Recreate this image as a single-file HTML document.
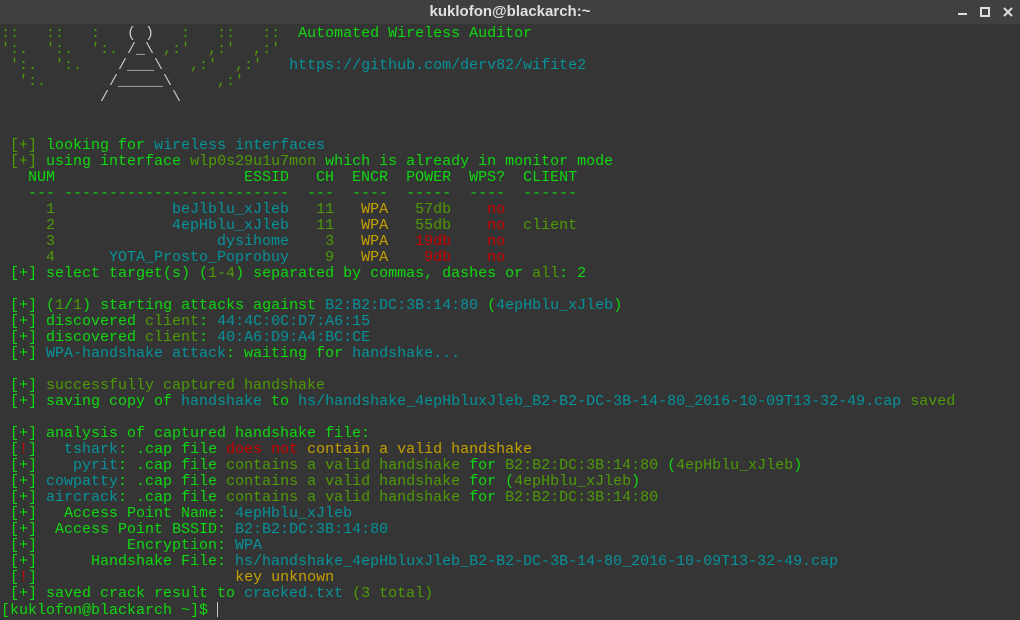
<!DOCTYPE html>
<html><head><meta charset="utf-8">
<style>
html,body{margin:0;padding:0;}
body{width:1020px;height:620px;background:#353535;overflow:hidden;position:relative;}
.title{position:absolute;left:0;top:0;width:1020px;height:24px;background:#404040;color:#e0e0e0;font:bold 15px "Liberation Sans",sans-serif;text-align:center;line-height:24px;}
.ctl{position:absolute;top:0;height:24px;}
.term{position:absolute;left:1px;top:26px;font:15px/16px "Liberation Mono",monospace;color:#10d810;}
.term div{height:16px;white-space:pre;}
.g{color:#10d810}.d{color:#4e9a06}.c{color:#06939a}.y{color:#c4a000}.r{color:#cc0000}.w{color:#c8c8c8}
.cur{display:inline-block;width:1px;height:15px;background:#c8c8c8;vertical-align:-3px;}
</style></head><body>
<div class="title">kuklofon@blackarch:~</div>
<svg class="ctl" style="left:950px" width="70" height="24">
<rect x="8" y="13" width="9" height="2" fill="#ddd"/>
<rect x="31" y="8" width="8" height="8" fill="none" stroke="#ddd" stroke-width="2"/>
<path d="M54 8 L62 16 M62 8 L54 16" stroke="#ddd" stroke-width="2"/>
</svg>
<div class="term"><div><span class="d">::   ::   :   </span><span class="w">( )</span><span class="d">   :   ::   ::</span>  <span class="g">Automated Wireless Auditor</span></div><div><span class="d">':.  ':.  ':. </span><span class="w">/_\</span><span class="d"> ,:'  ,:'  ,:'</span></div><div><span class="d"> ':.  ':.    </span><span class="w">/___\</span><span class="d">   ,:'  ,:'</span>   <span class="c">https://github.com/derv82/wifite2</span></div><div><span class="d">  ':.       </span><span class="w">/_____\</span><span class="d">     ,:'</span></div><div><span class="w">           /       \</span></div><div> </div><div> </div><div> <span class="d">[+]</span> looking for <span class="c">wireless interfaces</span></div><div> <span class="d">[+]</span> using interface <span class="d">wlp0s29u1u7mon</span> which is already in monitor mode</div><div>   NUM                     ESSID   CH  ENCR  POWER  WPS?  CLIENT</div><div>   --- -------------------------  ---  ----  -----  ----  ------</div><div><span class="d">     1</span><span class="c">             beJlblu_xJleb</span><span class="d">   11</span><span class="y">   WPA</span><span class="d">   57db</span><span class="r">    no</span></div><div><span class="d">     2</span><span class="c">             4epHblu_xJleb</span><span class="d">   11</span><span class="y">   WPA</span><span class="d">   55db</span><span class="r">    no</span>  <span class="d">client</span></div><div><span class="d">     3</span><span class="c">                  dysihome</span><span class="d">    3</span><span class="y">   WPA</span><span class="r">   19db</span><span class="r">    no</span></div><div><span class="d">     4</span><span class="c">      YOTA_Prosto_Poprobuy</span><span class="d">    9</span><span class="y">   WPA</span><span class="r">    9db</span><span class="r">    no</span></div><div> [+] select target(s) (<span class="d">1-4</span>) separated by commas, dashes or <span class="d">all</span>: 2</div><div> </div><div> [+] (<span class="d">1</span>/<span class="d">1</span>) starting attacks against <span class="c">B2:B2:DC:3B:14:80</span> (<span class="c">4epHblu_xJleb</span>)</div><div> [+] discovered <span class="d">client</span>: <span class="c">44:4C:0C:D7:A6:15</span></div><div> [+] discovered <span class="d">client</span>: <span class="c">40:A6:D9:A4:BC:CE</span></div><div> [+] <span class="c">WPA-handshake attack</span>: waiting for <span class="c">handshake...</span></div><div> </div><div> [+] <span class="d">successfully captured handshake</span></div><div> [+] saving copy of <span class="c">handshake</span> to <span class="c">hs/handshake_4epHbluxJleb_B2-B2-DC-3B-14-80_2016-10-09T13-32-49.cap</span> <span class="d">saved</span></div><div> </div><div> [+] analysis of captured handshake file:</div><div> [<span class="r">!</span>]   <span class="c">tshark</span>: .cap file <span class="r">does not</span> <span class="y">contain a valid handshake</span></div><div> [+]    <span class="c">pyrit</span>: .cap file <span class="d">contains a valid handshake</span> for <span class="d">B2:B2:DC:3B:14:80</span> (<span class="d">4epHblu_xJleb</span>)</div><div> [+] <span class="c">cowpatty</span>: .cap file <span class="d">contains a valid handshake</span> for (<span class="d">4epHblu_xJleb</span>)</div><div> [+] <span class="c">aircrack</span>: .cap file <span class="d">contains a valid handshake</span> for <span class="d">B2:B2:DC:3B:14:80</span></div><div> [+]   Access Point Name: <span class="c">4epHblu_xJleb</span></div><div> [+]  Access Point BSSID: <span class="c">B2:B2:DC:3B:14:80</span></div><div> [+]          Encryption: <span class="c">WPA</span></div><div> [+]      Handshake File: <span class="c">hs/handshake_4epHbluxJleb_B2-B2-DC-3B-14-80_2016-10-09T13-32-49.cap</span></div><div> [<span class="r">!</span>]                      <span class="y">key unknown</span></div><div> [+] saved crack result to <span class="c">cracked.txt</span> <span class="d">(3 total)</span></div><div>[kuklofon@blackarch ~]$ <span class="cur"></span></div></div>
</body></html>
